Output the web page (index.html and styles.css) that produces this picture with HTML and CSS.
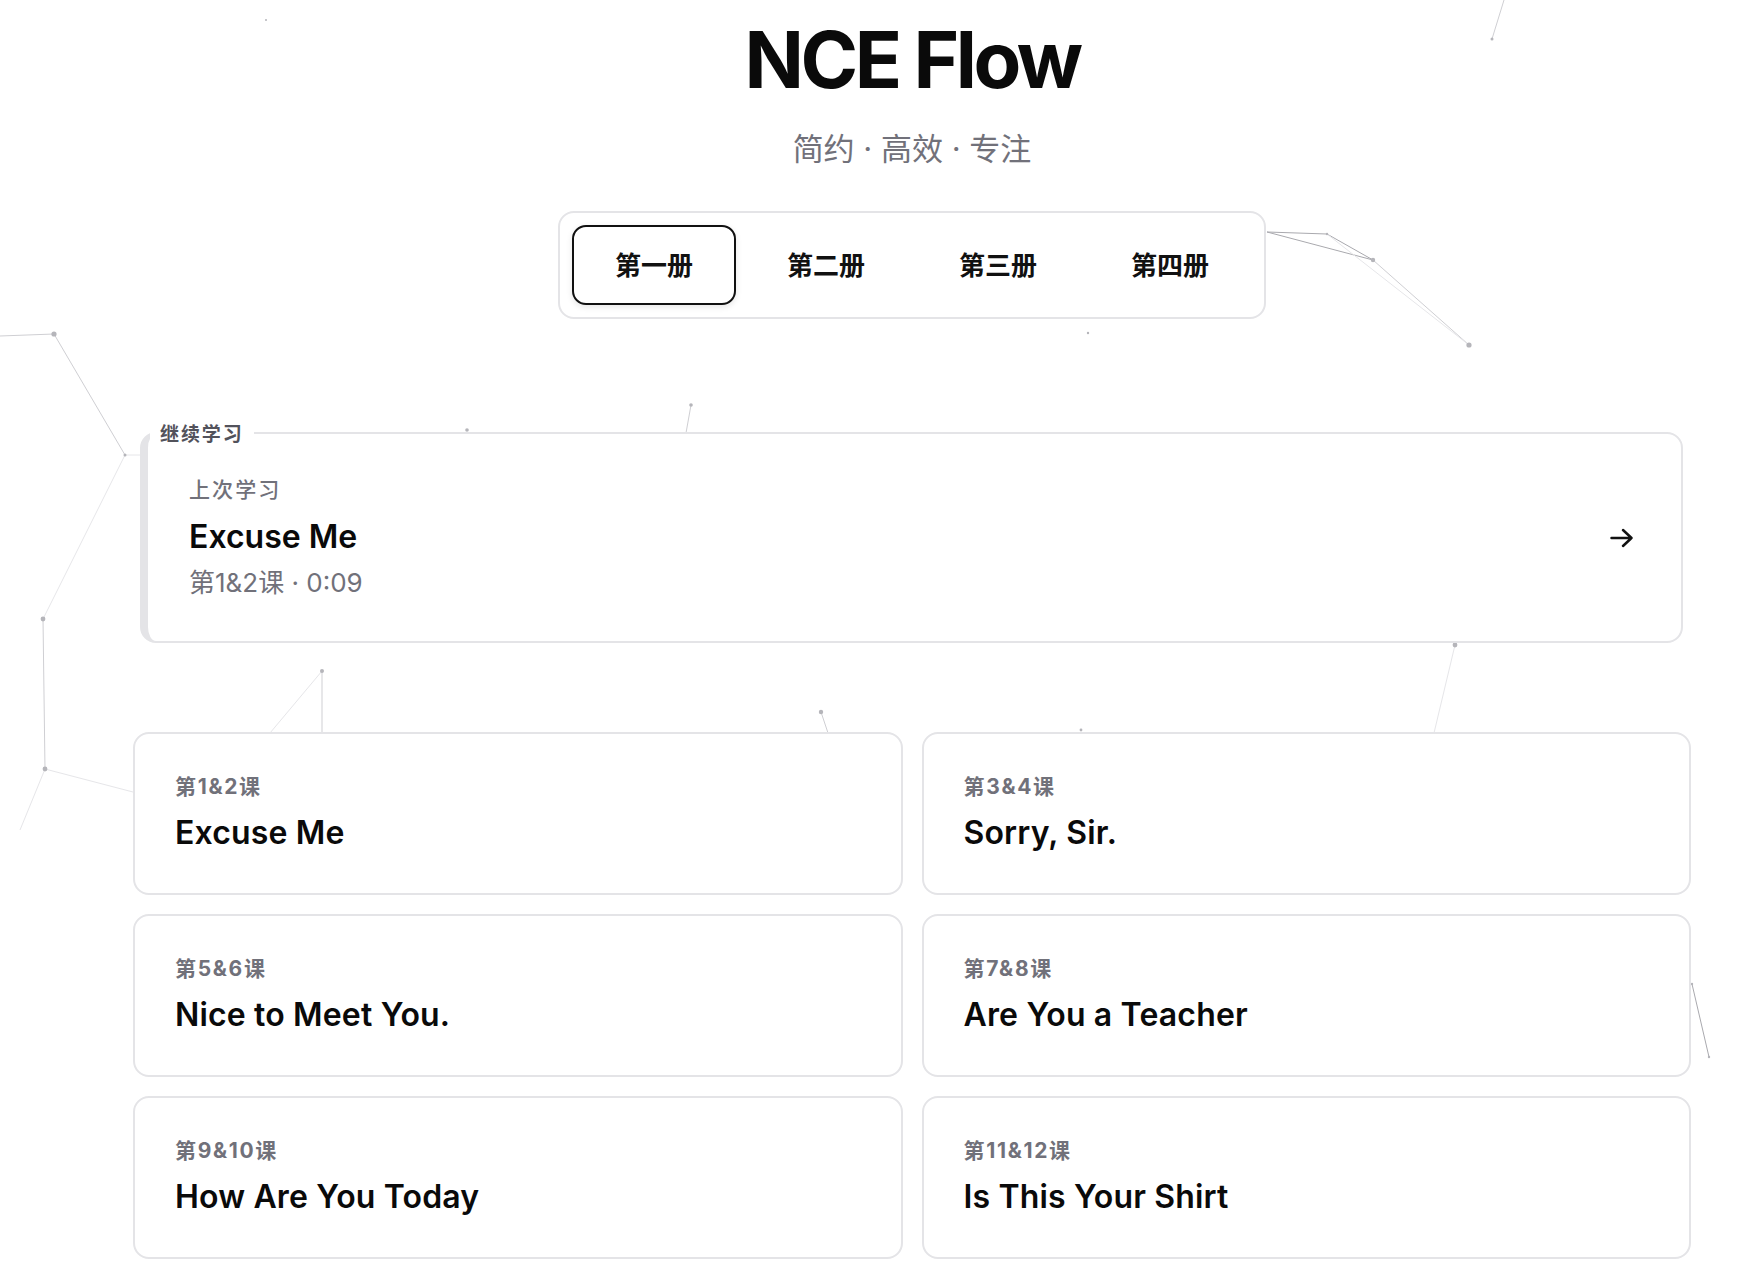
FILE: index.html
```html
<!DOCTYPE html>
<html lang="zh-CN">
<head>
<meta charset="utf-8">
<title>NCE Flow</title>
<link rel="stylesheet" href="styles.css">
</head>
<body>
<svg class="bg" width="1762" height="1276" viewBox="0 0 1762 1276" aria-hidden="true">
  <g class="ln">
    <line x1="1504" y1="0" x2="1492" y2="39" />
    <line x1="1267" y1="232" x2="1327" y2="234" class="dk"/>
    <line x1="1327" y1="234" x2="1373" y2="260" class="dk"/>
    <line x1="1267" y1="232" x2="1373" y2="260" class="dk"/>
    <line x1="1373" y1="260" x2="1469" y2="345" />
    <line x1="1327" y1="234" x2="1469" y2="345" class="lt"/>
    <line x1="0" y1="336" x2="54" y2="334" />
    <line x1="54" y1="334" x2="125" y2="455" />
    <line x1="125" y1="455" x2="145" y2="455" class="lt"/>
    <line x1="125" y1="455" x2="43" y2="619" class="lt"/>
    <line x1="43" y1="619" x2="45" y2="769" />
    <line x1="45" y1="769" x2="133" y2="792" class="lt"/>
    <line x1="45" y1="769" x2="20" y2="830" class="lt"/>
    <line x1="691" y1="405" x2="686" y2="433" />
    <line x1="322" y1="671" x2="322" y2="733" />
    <line x1="322" y1="671" x2="270" y2="733" class="lt"/>
    <line x1="821" y1="712" x2="828" y2="733" />
    <line x1="1455" y1="645" x2="1434" y2="733" class="lt"/>
    <line x1="1692" y1="984" x2="1709" y2="1057" class="dk"/>
  </g>
  <g class="dt">
    <circle cx="1492" cy="39" r="1.5"/>
    <circle cx="266" cy="20" r="1"/>
    <circle cx="1327" cy="234" r="1.2"/>
    <circle cx="1373" cy="260" r="2.2"/>
    <circle cx="1469" cy="345" r="2.6"/>
    <circle cx="1088" cy="333" r="1.2"/>
    <circle cx="54" cy="334" r="2.6"/>
    <circle cx="125" cy="455" r="1.5"/>
    <circle cx="43" cy="619" r="2.4"/>
    <circle cx="45" cy="769" r="2.4"/>
    <circle cx="691" cy="405" r="1.8"/>
    <circle cx="467" cy="430" r="1.8"/>
    <circle cx="322" cy="671" r="2"/>
    <circle cx="821" cy="712" r="2.2"/>
    <circle cx="1081" cy="730" r="1.4"/>
    <circle cx="1455" cy="645" r="2.4"/>
    <circle cx="1692" cy="984" r="1.2"/>
    <circle cx="1709" cy="1057" r="1.2"/>
  </g>
</svg>

<div class="page">
  <header class="hero">
    <h1 class="title">NCE Flow</h1>
    <p class="subtitle">简约 · 高效 · 专注</p>
    <nav class="tabs">
      <button class="tab active">第一册</button>
      <button class="tab">第二册</button>
      <button class="tab">第三册</button>
      <button class="tab">第四册</button>
    </nav>
  </header>

  <section class="continue">
    <span class="legend">继续学习</span>
    <div class="continue-body">
      <div class="continue-text">
        <div class="kicker">上次学习</div>
        <div class="continue-title">Excuse Me</div>
        <div class="continue-meta">第1&amp;2课 · 0:09</div>
      </div>
      <svg class="arrow" width="24" height="20" viewBox="0 0 24 20" aria-hidden="true">
        <path d="M1.5 10H21.5M13 2L21.5 10L13 18" fill="none" stroke="#111" stroke-width="2.5" stroke-linecap="round" stroke-linejoin="round"/>
      </svg>
    </div>
  </section>

  <section class="grid">
    <article class="lesson"><div class="num">第1&amp;2课</div><div class="name">Excuse Me</div></article>
    <article class="lesson"><div class="num">第3&amp;4课</div><div class="name">Sorry, Sir.</div></article>
    <article class="lesson"><div class="num">第5&amp;6课</div><div class="name">Nice to Meet You.</div></article>
    <article class="lesson"><div class="num">第7&amp;8课</div><div class="name">Are You a Teacher</div></article>
    <article class="lesson"><div class="num">第9&amp;10课</div><div class="name">How Are You Today</div></article>
    <article class="lesson"><div class="num">第11&amp;12课</div><div class="name">Is This Your Shirt</div></article>
  </section>
</div>
</body>
</html>
```

FILE: styles.css
```css
* { box-sizing: border-box; }

html, body {
  margin: 0;
  padding: 0;
  background: #ffffff;
}

body {
  font-family: Inter, "Noto Sans CJK SC", "Noto Sans", sans-serif;
  color: #0a0a0a;
  position: relative;
  min-height: 1276px;
  overflow: hidden;
}

.bg {
  position: absolute;
  left: 0;
  top: 0;
  z-index: 0;
  pointer-events: none;
}

.bg .ln line {
  stroke: #cfcfd3;
  stroke-width: 1;
}
.bg .ln line.dk { stroke: #a9a9ae; }
.bg .ln line.lt { stroke: #e6e6e9; }
.bg .dt circle { fill: #b5b5ba; }

.page {
  position: relative;
  z-index: 1;
  padding: 0 71px 0 133px;
}

.hero {
  display: flex;
  flex-direction: column;
  align-items: center;
}

.title {
  margin: 21px 0 0;
  font-size: 78px;
  line-height: 78px;
  font-weight: 700;
  letter-spacing: -0.045em;
  color: #0a0a0a;
}

.subtitle {
  margin: 30px 0 0;
  font-size: 31px;
  line-height: 40px;
  color: #71717a;
  font-weight: 400;
}

.tabs {
  margin-top: 42px;
  display: flex;
  gap: 8px;
  padding: 12px;
  border: 2px solid #e4e4e7;
  border-radius: 16px;
  background: #ffffff;
}

.tab {
  width: 164px;
  height: 80px;
  border: 2px solid transparent;
  border-radius: 14px;
  background: transparent;
  font-family: Inter, "Noto Sans CJK SC", sans-serif;
  font-size: 26px;
  line-height: 32px;
  font-weight: 700;
  color: #111111;
  cursor: pointer;
  padding: 1px 0 0;
}

.tab.active {
  border-color: #111111;
  background: #ffffff;
  box-shadow: 0 2px 6px rgba(0, 0, 0, 0.10);
}

.continue {
  position: relative;
  margin: 113px 8px 0 7px;
  border: 2px solid #e4e4e7;
  border-left-width: 8px;
  border-radius: 16px;
  background: #ffffff;
}

.legend {
  position: absolute;
  top: -12px;
  left: 2px;
  padding: 0 10px;
  background: #ffffff;
  font-size: 19px;
  line-height: 26px;
  font-weight: 700;
  letter-spacing: 0.1em;
  color: #52525b;
}

.continue-body {
  display: flex;
  align-items: center;
  justify-content: space-between;
  padding: 42px 47px 42px 41px;
}

.kicker {
  font-size: 21px;
  line-height: 28px;
  font-weight: 500;
  letter-spacing: 0.1em;
  color: #71717a;
}

.continue-title {
  margin-top: 13px;
  font-size: 32px;
  line-height: 40px;
  font-weight: 600;
  color: #0a0a0a;
}

.continue-meta {
  margin-top: 10px;
  font-size: 26px;
  line-height: 32px;
  color: #71717a;
}

.arrow {
  flex: none;
  display: block;
}

.grid {
  margin-top: 89px;
  display: grid;
  grid-template-columns: 1fr 1fr;
  gap: 19px;
}

.lesson {
  border: 2px solid #e4e4e7;
  border-radius: 16px;
  background: #ffffff;
  padding: 39px 40px 40px;
  height: 163px;
}

.num {
  font-size: 21px;
  line-height: 28px;
  font-weight: 700;
  letter-spacing: 0.08em;
  color: #71717a;
}

.name {
  margin-top: 12px;
  font-size: 32px;
  line-height: 40px;
  font-weight: 600;
  letter-spacing: 0.005em;
  color: #0a0a0a;
}
```
